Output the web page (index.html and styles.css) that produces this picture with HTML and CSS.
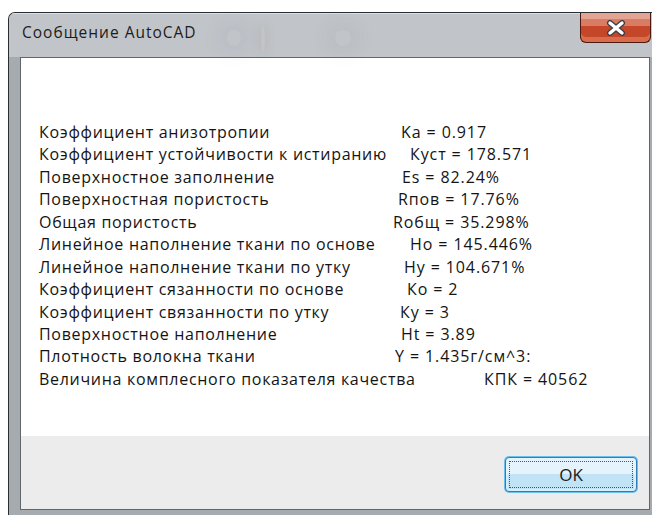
FILE: index.html
```html
<!DOCTYPE html>
<html lang="ru">
<head>
<meta charset="utf-8">
<title>Сообщение AutoCAD</title>
<link rel="stylesheet" href="styles.css">
</head>
<body>
<div class="window">
  <div class="titlebar">
    <span class="glass glass-a"></span>
    <span class="glass glass-b"></span>
    <span class="glass glass-c"></span>
    <span class="title">Сообщение AutoCAD</span>
    <button class="close" type="button" aria-label="Закрыть">
      <svg width="22" height="16" viewBox="0 0 22 16">
        <path d="M5 3 L17 13 M17 3 L5 13" stroke="#3a3f48" stroke-width="6" stroke-linecap="round"/>
        <path d="M5 3 L17 13 M17 3 L5 13" stroke="#ffffff" stroke-width="3.4" stroke-linecap="round"/>
      </svg>
    </button>
  </div>
  <div class="frame">
    <div class="client">
      <div class="message">
        <div class="row"><span class="label">Коэффициент анизотропии</span><span class="value" style="--shift:8px">Ka = 0.917</span></div>
        <div class="row"><span class="label">Коэффициент устойчивости к истиранию</span><span class="value" style="--shift:17px">Куст = 178.571</span></div>
        <div class="row"><span class="label">Поверхностное заполнение</span><span class="value" style="--shift:9px">Es = 82.24%</span></div>
        <div class="row"><span class="label">Поверхностная пористость</span><span class="value" style="--shift:5px">Rпов = 17.76%</span></div>
        <div class="row"><span class="label">Общая пористость</span><span class="value" style="--shift:0px">Rобщ = 35.298%</span></div>
        <div class="row"><span class="label">Линейное наполнение ткани по основе</span><span class="value" style="--shift:17px">Но = 145.446%</span></div>
        <div class="row"><span class="label">Линейное наполнение ткани по утку</span><span class="value" style="--shift:11px">Ну = 104.671%</span></div>
        <div class="row"><span class="label">Коэффициент сязанности по основе</span><span class="value" style="--shift:14px">Ко = 2</span></div>
        <div class="row"><span class="label">Коэффициент связанности по утку</span><span class="value" style="--shift:7px">Ку = 3</span></div>
        <div class="row"><span class="label">Поверхностное наполнение</span><span class="value" style="--shift:8px">Ht = 3.89</span></div>
        <div class="row"><span class="label">Плотность волокна ткани</span><span class="value" style="--shift:2px">Y = 1.435г/см^3:</span></div>
        <div class="row"><span class="label">Величина комплесного показателя качества</span><span class="value" style="--shift:91px">КПК = 40562</span></div>
      </div>
      <div class="footer">
        <button class="ok" type="button"><span class="focus">OK</span></button>
      </div>
    </div>
  </div>
</div>
</body>
</html>
```

FILE: styles.css
```css
html, body {
  margin: 0;
  padding: 0;
  background-color: #ffffff;
  overflow: hidden;
  width: 652px;
  height: 515px;
}

body {
  font-family: "Open Sans", "Noto Sans", "DejaVu Sans", sans-serif;
  color: #141414;
}

/* window frame */
.window {
  margin: 12px 0 0 8px;
  width: 660px;
  height: 504px;
  box-sizing: border-box;
  border-top: 1px solid #2a2e33;
  border-left: 1px solid #2a2e33;
  border-radius: 7px 0 0 0;
  background-color: #a6abaf;
  display: flex;
  flex-direction: column;
  overflow: hidden;
}

/* glass title bar */
.titlebar {
  position: relative;
  height: 44px;
  flex: none;
  display: flex;
  align-items: center;
  padding-left: 13px;
  background-color: #c1c5c9;
  border-top: 1px solid #dde0e3;
  box-sizing: border-box;
}

/* faint shapes of the window behind the glass */
.glass {
  position: absolute;
  border-radius: 50%;
  pointer-events: none;
}
.glass-a {
  left: 218px; top: 16px; width: 14px; height: 16px;
  box-shadow: 0 0 18px 8px rgba(120, 100, 150, 0.09);
}
.glass-b {
  left: 252px; top: 12px; width: 4px; height: 26px;
  box-shadow: 0 0 10px 3px rgba(140, 95, 80, 0.12);
}
.glass-c {
  left: 326px; top: 16px; width: 16px; height: 16px;
  box-shadow: 0 0 18px 8px rgba(100, 105, 115, 0.07);
}

.title {
  position: relative;
  font-size: 15.5px;
  letter-spacing: 1px;
  margin-top: -8px;
  color: #1c1c1c;
}

/* close button, sits over the frame corner */
.close {
  position: absolute;
  left: 571px;
  top: -1px;
  width: 71px;
  height: 30px;
  padding: 0;
  border: 1px solid #4a1a10;
  border-top: none;
  border-radius: 0 0 6px 6px;
  background-color: #c54729;
  box-shadow: inset 0 6px 0 #e4a493, inset 0 13px 0 #d97c63, inset 0 -5px 0 #d96c4b;
  display: flex;
  align-items: center;
  justify-content: center;
}

/* side frame around the client area */
.frame {
  flex: 1;
  display: flex;
  padding: 0 18px 6px 11px;
  background-color: #a6abaf;
}

.client {
  flex: 1;
  display: flex;
  flex-direction: column;
  border: 1px solid #5f666c;
  background-color: #ffffff;
}

.message {
  height: 378px;
  box-sizing: border-box;
  padding: 63px 0 0 18px;
  background-color: #ffffff;
  font-size: 16px;
  letter-spacing: 0.7px;
}

.row {
  display: grid;
  grid-template-columns: 354px auto;
  height: 22.45px;
  line-height: 22.45px;
  white-space: nowrap;
}

.value {
  padding-left: var(--shift);
  letter-spacing: 0.9px;
}

.footer {
  flex: 1;
  background-color: #ececec;
  display: flex;
  justify-content: flex-end;
  align-items: flex-start;
  padding: 21px 12px 0 0;
  box-sizing: border-box;
}

.ok {
  width: 132px;
  height: 35px;
  padding: 3px;
  box-sizing: border-box;
  border: 1px solid #2f7eb8;
  border-radius: 4px;
  background-color: #c1e3f6;
  box-shadow: 0 0 0 1px #6ec0ec, inset 0 16px 0 #e4f3fc, inset 0 0 0 2px #d6eefb;
  font-family: inherit;
  display: flex;
}
.focus {
  flex: 1;
  border: 1px dotted #6b4a3a;
  display: flex;
  align-items: center;
  justify-content: center;
  font-size: 17px;
  color: #1a1a1a;
}
```
